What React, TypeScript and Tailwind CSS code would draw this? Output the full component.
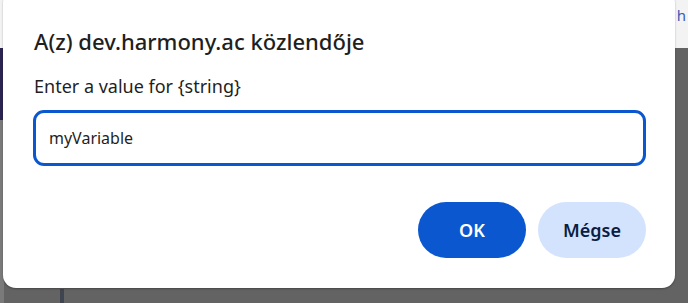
export default function App() {
  return (
    <div className="relative w-[688px] h-[303px] overflow-hidden bg-[#636363] font-['Noto_Sans',sans-serif]">
      {/* page behind the dialog */}
      <div className="flex flex-col h-full">
        <div className="h-[48px] bg-[#f3f3f3] flex justify-end">
          <span className="mt-[4px] mr-[2px] text-[15px] text-[#3b5bb5]">h</span>
        </div>
        <div className="flex flex-1">
          <div className="w-[4px] flex flex-col">
            <div className="h-[72px] bg-[#2c2450]" />
            <div className="flex-1 bg-[#7a7a7a]" />
          </div>
          <div className="flex-1 flex flex-col justify-end">
            <div className="h-[14px] ml-[56px] w-[4px] bg-[#3f4550]" />
          </div>
        </div>
      </div>

      {/* prompt dialog */}
      <div className="absolute left-[3px] top-[-10px] w-[672px] h-[298px] bg-white rounded-[13px] shadow-[0_1px_2px_rgba(0,0,0,0.3)] flex flex-col pl-[30px] pr-[29px] pt-[36px]">
        <h1 className="pl-[1px] text-[22px] leading-[30px] font-medium text-[#1f1f1f]">A(z) dev.harmony.ac közlendője</h1>
        <p className="pl-[1px] mt-[18px] text-[18px] leading-[24px] text-[#1f1f1f]">Enter a value for {"{string}"}</p>
        <div className="mt-[12px] h-[56px] border-[3px] border-[#0b57d0] rounded-[11px] flex items-center px-[13px]">
          <span className="text-[16px] text-[#1f1f1f]">myVariable</span>
        </div>
        <div className="mt-[36px] flex justify-end gap-[12px]">
          <button className="w-[108px] h-[56px] rounded-full bg-[#0b57d0] text-white text-[18px] font-semibold">OK</button>
          <button className="w-[108px] h-[56px] rounded-full bg-[#d3e3fd] text-[#0a1d42] text-[18px] font-semibold">Mégse</button>
        </div>
      </div>
    </div>
  );
}
